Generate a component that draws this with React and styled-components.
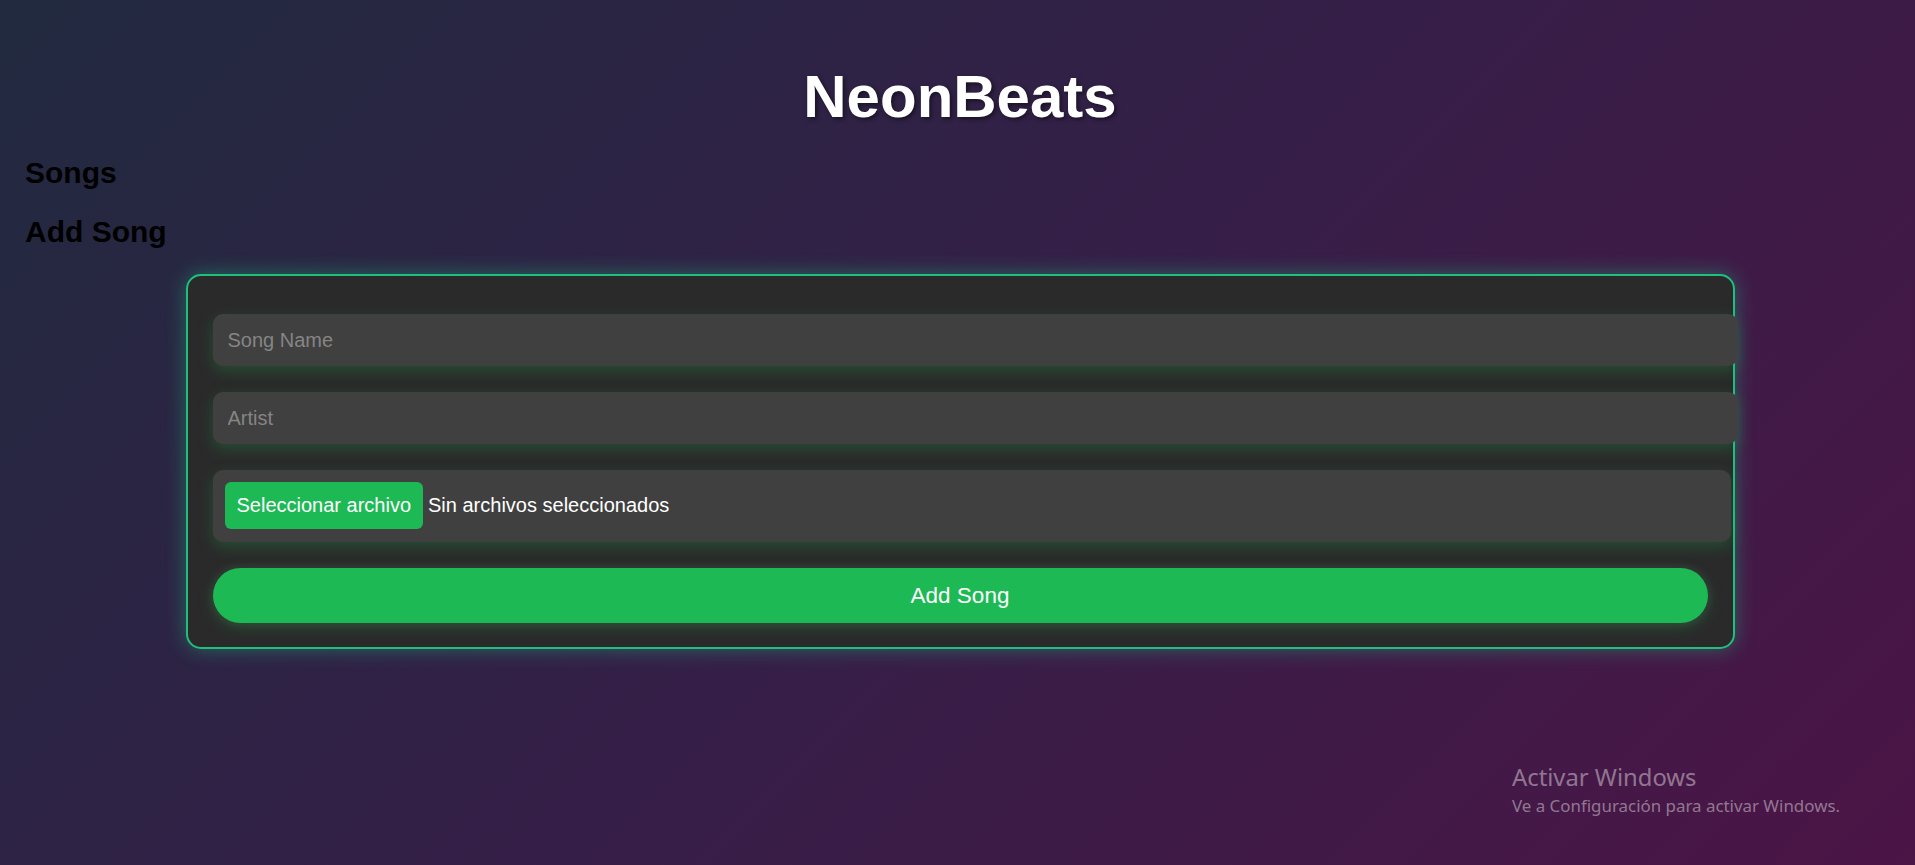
import React from 'react';
import styled, { createGlobalStyle } from 'styled-components';

const GlobalStyle = createGlobalStyle`
  html, body {
    margin: 0;
    padding: 0;
  }
  body {
    min-height: 100vh;
    font-family: "Liberation Sans", Arial, sans-serif;
    background: linear-gradient(135deg, #212a3f 0%, #351f48 50%, #4b1546 100%);
    background-attachment: fixed;
  }
`;

const Page = styled.div`
  position: relative;
  min-height: 100vh;
  padding: 0 25px 0 30px;
  box-sizing: border-box;
  overflow: hidden;
`;

const Title = styled.h1`
  margin: 0;
  padding-top: 62px;
  font-size: 60px;
  font-weight: 700;
  text-align: center;
  color: #ffffff;
  text-shadow: 2px 2px 4px rgba(0, 0, 0, 0.5);
`;

const SectionTitle = styled.h2`
  margin: 25px 0 25px -5px;
  font-size: 30px;
  font-weight: 700;
  color: #000000;
`;

const Card = styled.div`
  width: 1549px;
  margin: 0 auto;
  box-sizing: border-box;
  padding: 38px 25px 24px;
  background: #2a2a2a;
  border: 2px solid #1fbf7e;
  border-radius: 15px;
  box-shadow: 0 0 20px rgba(29, 191, 126, 0.45);
`;

const Form = styled.form`
  display: flex;
  flex-direction: column;
  align-items: flex-start;
  gap: 26px;
`;

const TextInput = styled.input`
  width: 100%;
  box-sizing: content-box;
  padding: 15px;
  font-family: "Liberation Sans", Arial, sans-serif;
  font-size: 20px;
  line-height: 22px;
  color: #ffffff;
  background: #404040;
  border: none;
  border-radius: 10px;
  outline: none;
  box-shadow: 0 5px 15px rgba(29, 185, 84, 0.25);

  &::placeholder {
    color: #858585;
  }
`;

const FileBox = styled.label`
  display: flex;
  align-items: center;
  width: calc(100% + 23px);
  box-sizing: border-box;
  padding: 12px 12px 13px;
  background: #404040;
  border-radius: 10px;
  box-shadow: 0 5px 15px rgba(29, 185, 84, 0.25);
  cursor: pointer;

  input {
    display: none;
  }
`;

const FileButton = styled.span`
  padding: 12px;
  margin-right: 5px;
  font-size: 20px;
  line-height: 23px;
  color: #ffffff;
  background: #1db954;
  border-radius: 6px;
`;

const FileName = styled.span`
  font-size: 20px;
  line-height: 23px;
  color: #ffffff;
`;

const SubmitButton = styled.button`
  width: 100%;
  padding: 15px;
  font-family: "Liberation Sans", Arial, sans-serif;
  font-size: 22.5px;
  line-height: 25px;
  color: #ffffff;
  background: #1db954;
  border: none;
  border-radius: 30px;
  cursor: pointer;
  box-shadow: 0 4px 15px rgba(29, 185, 84, 0.25), 0 0 12px rgba(255, 255, 255, 0.08);
`;

const Watermark = styled.div`
  position: absolute;
  left: 1512px;
  top: 761px;
  font-family: "Noto Sans", "Open Sans", sans-serif;
  color: rgba(255, 255, 255, 0.42);
  pointer-events: none;
`;

const WatermarkTitle = styled.div`
  font-size: 23.8px;
  line-height: 32px;
`;

const WatermarkText = styled.div`
  font-size: 16.9px;
  line-height: 26px;
`;

const App = () => {
  return (
    <Page>
      <GlobalStyle />
      <Title>NeonBeats</Title>
      <SectionTitle>Songs</SectionTitle>
      <SectionTitle>Add Song</SectionTitle>
      <Card>
        <Form onSubmit={(e) => e.preventDefault()}>
          <TextInput type="text" placeholder="Song Name" />
          <TextInput type="text" placeholder="Artist" />
          <FileBox>
            <input type="file" accept="audio/*" />
            <FileButton>Seleccionar archivo</FileButton>
            <FileName>Sin archivos seleccionados</FileName>
          </FileBox>
          <SubmitButton type="submit">Add Song</SubmitButton>
        </Form>
      </Card>
      <Watermark>
        <WatermarkTitle>Activar Windows</WatermarkTitle>
        <WatermarkText>Ve a Configuración para activar Windows.</WatermarkText>
      </Watermark>
    </Page>
  );
};

export default App;
